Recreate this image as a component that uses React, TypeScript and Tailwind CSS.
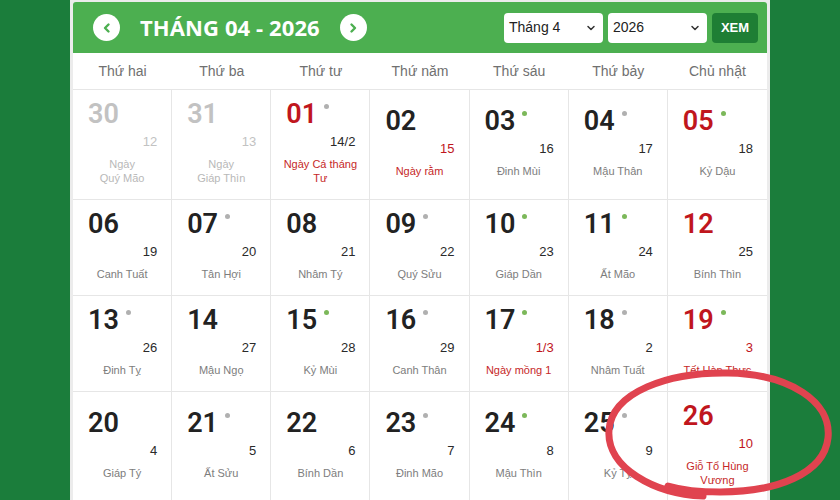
import { ChevronDown } from 'lucide-react'

type Day = {
  d: string
  lunar: string
  note: string[]
  dot?: 'gray' | 'green'
  muted?: boolean
  redDay?: boolean
  redLunar?: boolean
  redNote?: boolean
}

const weekdays = ['Thứ hai', 'Thứ ba', 'Thứ tư', 'Thứ năm', 'Thứ sáu', 'Thứ bảy', 'Chủ nhật']

const days: Day[] = [
  { d: '30', lunar: '12', note: ['Ngày', 'Quý Mão'], muted: true },
  { d: '31', lunar: '13', note: ['Ngày', 'Giáp Thìn'], muted: true },
  { d: '01', lunar: '14/2', note: ['Ngày Cá tháng', 'Tư'], dot: 'gray', redDay: true, redNote: true },
  { d: '02', lunar: '15', note: ['Ngày rằm'], redLunar: true, redNote: true },
  { d: '03', lunar: '16', note: ['Đinh Mùi'], dot: 'green' },
  { d: '04', lunar: '17', note: ['Mậu Thân'], dot: 'gray' },
  { d: '05', lunar: '18', note: ['Kỷ Dậu'], dot: 'green', redDay: true },
  { d: '06', lunar: '19', note: ['Canh Tuất'] },
  { d: '07', lunar: '20', note: ['Tân Hợi'], dot: 'gray' },
  { d: '08', lunar: '21', note: ['Nhâm Tý'] },
  { d: '09', lunar: '22', note: ['Quý Sửu'], dot: 'gray' },
  { d: '10', lunar: '23', note: ['Giáp Dần'], dot: 'green' },
  { d: '11', lunar: '24', note: ['Ất Mão'], dot: 'green' },
  { d: '12', lunar: '25', note: ['Bính Thìn'], redDay: true },
  { d: '13', lunar: '26', note: ['Đinh Tỵ'], dot: 'gray' },
  { d: '14', lunar: '27', note: ['Mậu Ngọ'] },
  { d: '15', lunar: '28', note: ['Kỷ Mùi'], dot: 'green' },
  { d: '16', lunar: '29', note: ['Canh Thân'], dot: 'gray' },
  { d: '17', lunar: '1/3', note: ['Ngày mồng 1'], dot: 'green', redLunar: true, redNote: true },
  { d: '18', lunar: '2', note: ['Nhâm Tuất'], dot: 'gray' },
  { d: '19', lunar: '3', note: ['Tết Hàn Thực'], dot: 'green', redDay: true, redLunar: true, redNote: true },
  { d: '20', lunar: '4', note: ['Giáp Tý'] },
  { d: '21', lunar: '5', note: ['Ất Sửu'], dot: 'gray' },
  { d: '22', lunar: '6', note: ['Bính Dần'] },
  { d: '23', lunar: '7', note: ['Đinh Mão'], dot: 'gray' },
  { d: '24', lunar: '8', note: ['Mậu Thìn'], dot: 'green' },
  { d: '25', lunar: '9', note: ['Kỷ Tỵ'], dot: 'gray' },
  { d: '26', lunar: '10', note: ['Giỗ Tổ Hùng', 'Vương'], redDay: true, redLunar: true, redNote: true },
]

const Cell = ({ day, last }: { day: Day; last: boolean }) => {
  const dayColor = day.muted ? 'text-[#c2c2c2]' : day.redDay ? 'text-[#c0161d]' : 'text-[#222]'
  const lunarColor = day.muted ? 'text-[#c2c2c2]' : day.redLunar ? 'text-[#c0161d]' : 'text-[#2a2a2a]'
  const noteColor = day.muted ? 'text-[#b8b8b8]' : day.redNote ? 'text-[#c62828]' : 'text-[#7d7d7d]'

  return (
    <div
      className={`flex flex-col justify-center border-b border-[#e6e6e6] pt-[9px] pb-[14px] ${last ? '' : 'border-r'}`}
    >
      <div className="flex h-[30px] items-start pl-[15px]">
        <span className={`font-['Roboto',sans-serif] text-[27px] leading-[30px] font-semibold ${dayColor}`}>
          {day.d}
        </span>
        {day.dot && (
          <span
            className={`mt-[5px] ml-[7px] h-[5px] w-[5px] rounded-full ${day.dot === 'green' ? 'bg-[#7cb85a]' : 'bg-[#b0b0b0]'}`}
          />
        )}
      </div>
      <div className={`mt-[5px] pr-[14px] text-right text-[13px] leading-[16px] ${lunarColor}`}>{day.lunar}</div>
      <div className={`mt-[7px] text-center text-[11px] leading-[14px] ${noteColor}`}>
        {day.note.map((line) => (
          <div key={line}>{line}</div>
        ))}
      </div>
    </div>
  )
}

const Arrow = ({ dir }: { dir: 'left' | 'right' }) => (
  <div className="flex h-[27px] w-[27px] items-center justify-center rounded-full bg-white">
    <svg width="12" height="12" viewBox="0 0 12 12">
      <path
        d={dir === 'left' ? 'M7.5 2.5 L4 6 L7.5 9.5' : 'M4.5 2.5 L8 6 L4.5 9.5'}
        fill="none"
        stroke="#4caf50"
        strokeWidth="2.4"
        strokeLinecap="round"
        strokeLinejoin="round"
      />
    </svg>
  </div>
)

const Select = ({ value }: { value: string }) => (
  <div className="flex h-[30px] w-[99px] items-center justify-between rounded-[4px] bg-white pr-[6px] pl-[5px] text-[14px] text-[#222]">
    <span>{value}</span>
    <ChevronDown size={12} strokeWidth={3} className="text-[#333]" />
  </div>
)

const App = () => {
  return (
    <div className="relative h-[500px] w-[840px] overflow-hidden bg-[#1b7d3b] font-['Liberation_Sans',Arial,sans-serif]">
      <div className="ml-[70px] h-full w-[700px] bg-[#ececec] px-[3px] pt-[2px]">
        <div className="flex h-[51px] items-center rounded-t-[3px] bg-[#4caf50] pr-[9px] pl-[20px]">
          <Arrow dir="left" />
          <h1 className="mx-[20px] font-['Open_Sans',sans-serif] text-[22px] font-bold tracking-[0.1px] text-white">
            THÁNG 04 - 2026
          </h1>
          <Arrow dir="right" />
          <div className="ml-auto flex items-center gap-[5px]">
            <Select value="Tháng 4" />
            <Select value="2026" />
            <button className="h-[30px] w-[46px] rounded-[4px] bg-[#1e7e34] text-[13px] font-bold text-white">
              XEM
            </button>
          </div>
        </div>
        <div className="bg-white">
          <div className="grid grid-cols-7 border-b border-[#e6e6e6]">
            {weekdays.map((w) => (
              <div key={w} className="flex h-[36px] items-center justify-center text-[14px] text-[#707070]">
                {w}
              </div>
            ))}
          </div>
          <div className="grid grid-cols-7">
            {days.map((day, i) => (
              <Cell key={day.d} day={day} last={i % 7 === 6} />
            ))}
          </div>
        </div>
      </div>
      <svg className="pointer-events-none absolute inset-0" width="840" height="500" viewBox="0 0 840 500">
        <path
          d="M703 496 C 655 494, 606 468, 609 430 C 612 392, 668 372, 728 373 C 790 374, 832 402, 828 438 C 824 474, 776 492, 720 492 C 700 492, 682 490, 668 486"
          fill="none"
          stroke="#e0434f"
          strokeWidth="7"
          strokeLinecap="round"
        />
      </svg>
    </div>
  )
}

export default App
